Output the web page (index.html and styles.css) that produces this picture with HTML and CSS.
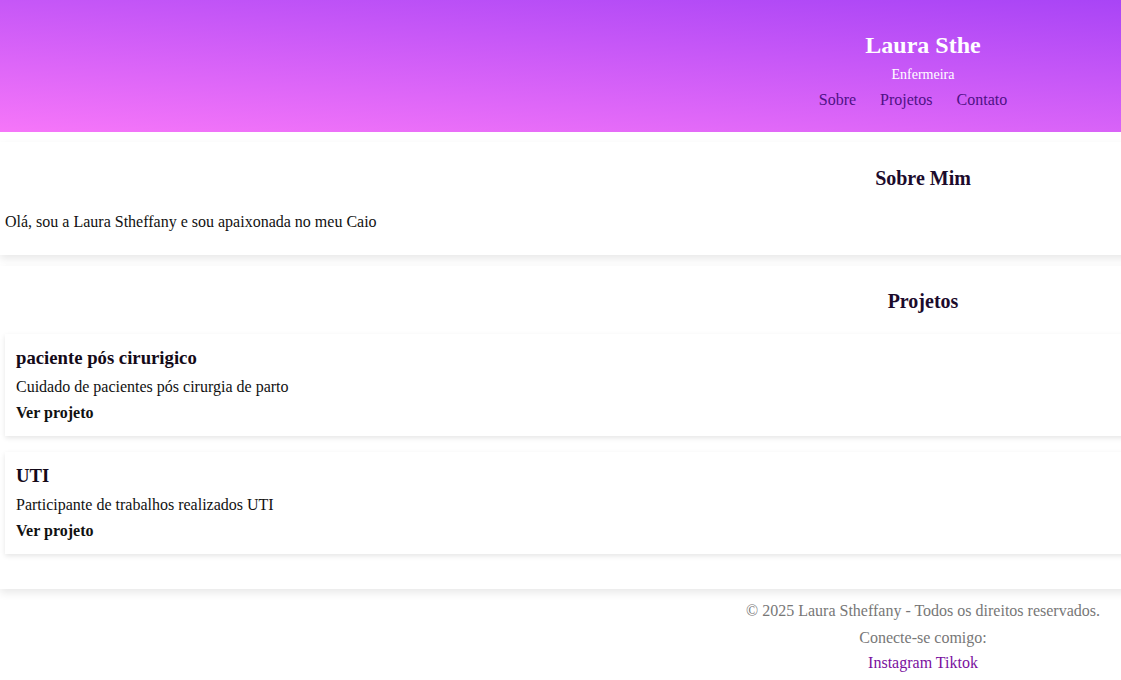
FILE: index.html
```html
<!DOCTYPE html>
<html lang="pt-BR">
<head>
<meta charset="utf-8">
<title>Laura Sthe - Enfermeira</title>
<link rel="stylesheet" href="styles.css">
</head>
<body>
<div class="page">
  <header class="site-header">
    <h1 class="site-title">Laura Sthe</h1>
    <p class="site-role">Enfermeira</p>
    <nav class="site-nav"><a href="#sobre">Sobre</a> <a href="#projetos">Projetos</a> <a href="#contato">Contato</a></nav>
  </header>

  <section class="panel panel-about" id="sobre">
    <h2 class="panel-title">Sobre Mim</h2>
    <p class="about-text">Olá, sou a Laura Stheffany e sou apaixonada no meu Caio</p>
  </section>

  <section class="panel panel-projects" id="projetos">
    <h2 class="panel-title projects-title">Projetos</h2>
    <div class="project-card">
      <h3 class="project-name">paciente pós cirurigico</h3>
      <p class="project-desc">Cuidado de pacientes pós cirurgia de parto</p>
      <a class="project-link" href="#">Ver projeto</a>
    </div>
    <div class="project-card">
      <h3 class="project-name">UTI</h3>
      <p class="project-desc">Participante de trabalhos realizados UTI</p>
      <a class="project-link" href="#">Ver projeto</a>
    </div>
  </section>

  <footer class="site-footer" id="contato">
    <p class="footer-copy">© 2025 Laura Stheffany - Todos os direitos reservados.</p>
    <p class="footer-connect">Conecte-se comigo:</p>
    <div class="footer-links"><a href="#">Instagram</a> <a href="#">Tiktok</a></div>
  </footer>
</div>
</body>
</html>
```

FILE: styles.css
```css
html {
  overflow-x: hidden;
  background: #ffffff;
}

body {
  margin: 0;
  font-family: "Liberation Serif", "Times New Roman", serif;
  font-size: 16px;
  color: #111111;
  overflow-x: hidden;
}

.page {
  width: 1846px;
}

.site-header {
  background: linear-gradient(to top right, #f676f9, #9638f5);
  text-align: center;
  padding: 32px 0 24px;
  height: 132px;
  box-sizing: border-box;
}

.site-title {
  margin: 0 0 8px;
  font-size: 24px;
  font-weight: bold;
  color: #ffffff;
}

.site-role {
  margin: 0 0 8px;
  font-size: 14px;
  color: #ffffff;
}

.site-nav a {
  color: #4e1185;
  text-decoration: none;
  margin-right: 20px;
  font-size: 16px;
}

.panel {
  background: #ffffff;
  padding: 0 5px;
  box-shadow: 0 4px 8px rgba(0, 0, 0, 0.09);
}

.panel-about {
  margin-top: 10px;
  padding-top: 1px;
  padding-bottom: 1px;
}

.panel-projects {
  margin-top: 11px;
  padding-top: 1px;
  padding-bottom: 19px;
}

.panel-title {
  text-align: center;
  font-size: 20px;
  font-weight: bold;
  color: #1c0b2c;
  margin: 24px 0 23px;
}

.projects-title {
  margin: 23px 0 21px;
}

.about-text {
  margin: 0 0 23px;
}

.project-card {
  background: #ffffff;
  box-shadow: 0 2px 5px rgba(0, 0, 0, 0.1);
  padding: 13px 11px 14px;
  margin-bottom: 16px;
  height: 102px;
  box-sizing: border-box;
}

.project-name {
  margin: 0 0 9px;
  font-size: 18.72px;
  font-weight: bold;
  color: #140a18;
}

.project-desc {
  margin: 0 0 8px;
}

.project-link {
  display: block;
  color: #111111;
  font-weight: bold;
  text-decoration: none;
}

.site-footer {
  text-align: center;
  color: #777777;
  padding: 13px 0 10px;
}

.footer-copy {
  margin: 0 0 9px;
}

.footer-connect {
  margin: 0 0 7px;
}

.footer-links a {
  color: #7a0f9e;
  text-decoration: none;
}
```
